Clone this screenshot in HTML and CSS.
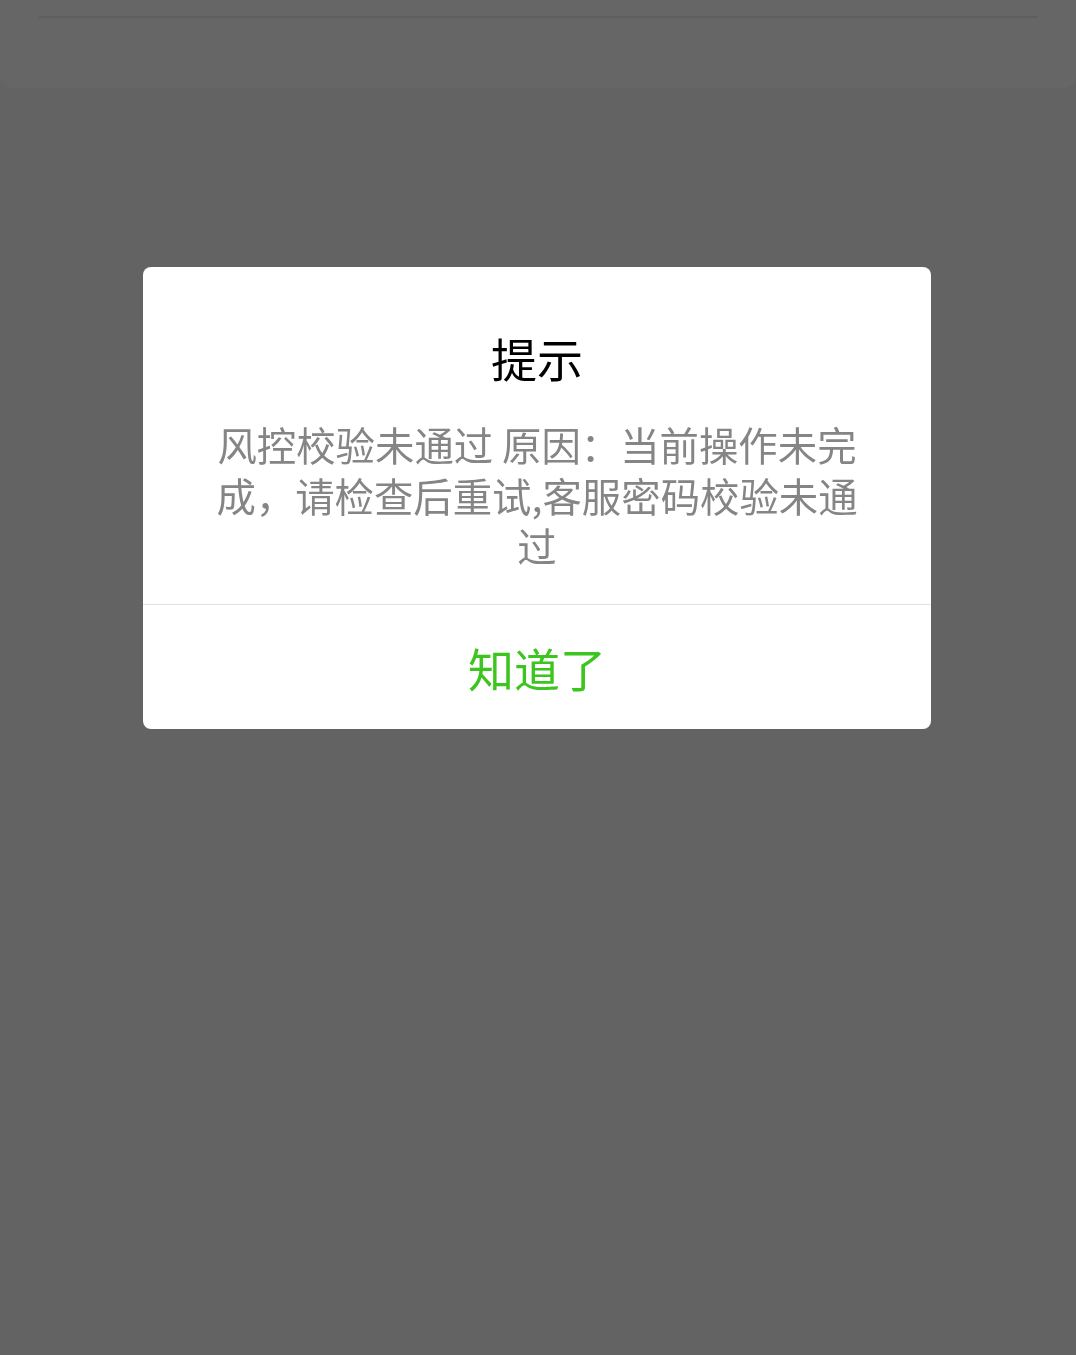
FILE: index.html
```html
<!DOCTYPE html>
<html lang="zh-CN">
<head>
    <meta charset="UTF-8">
    <meta name="viewport" content="width=device-width,initial-scale=1.0">
    <title>提示</title>
    <link rel="stylesheet" href="styles.css">
</head>
<body>
    <header class="top-card">
        <div class="top-line"></div>
    </header>

    <div class="mask"></div>

    <div class="dialog" role="alertdialog" aria-labelledby="dialog-title">
        <div class="dialog-hd">
            <strong class="dialog-title" id="dialog-title">提示</strong>
        </div>
        <div class="dialog-bd">风控校验未通过 原因：当前操作未完成，请检查后重试,客服密码校验未通过</div>
        <div class="dialog-ft">
            <a href="#" class="dialog-btn">知道了</a>
        </div>
    </div>
</body>
</html>
```

FILE: styles.css
```css
body {
    margin: 0;
    background: #f8f8f8;
    font-family: "Noto Sans CJK SC", "Noto Sans", sans-serif;
    min-height: 1355px;
}
/* Page behind the mask */
.top-card {
    height: 88px;
    background: #fff;
    border-radius: 0 0 14px 14px;
    padding: 16px 39px 0;
    box-sizing: border-box;
}
.top-line {
    height: 2px;
    background: #ececec;
}
/* Mask */
.mask {
    position: fixed;
    top: 0; left: 0; right: 0; bottom: 0;
    background: rgba(0,0,0,0.6);
    z-index: 1000;
}
/* Dialog */
.dialog {
    position: fixed;
    top: 267px;
    left: 143px;
    width: 788px;
    background: #fff;
    border-radius: 8px;
    text-align: center;
    overflow: hidden;
    z-index: 1100;
}
.dialog-hd {
    padding: 60px 64px 0;
}
.dialog-title {
    display: block;
    font-weight: normal;
    font-size: 46px;
    line-height: 60px;
    color: #000;
}
.dialog-bd {
    padding: 32px 64px 33px;
    font-size: 39.4px;
    line-height: 50.5px;
    color: #858585;
    word-wrap: break-word;
}
.dialog-ft {
    border-top: 1px solid #e1e1e1;
    display: flex;
}
.dialog-btn {
    flex: 1;
    display: block;
    height: 124px;
    line-height: 124px;
    font-size: 46px;
    color: #3cc51f;
    text-decoration: none;
}
```
